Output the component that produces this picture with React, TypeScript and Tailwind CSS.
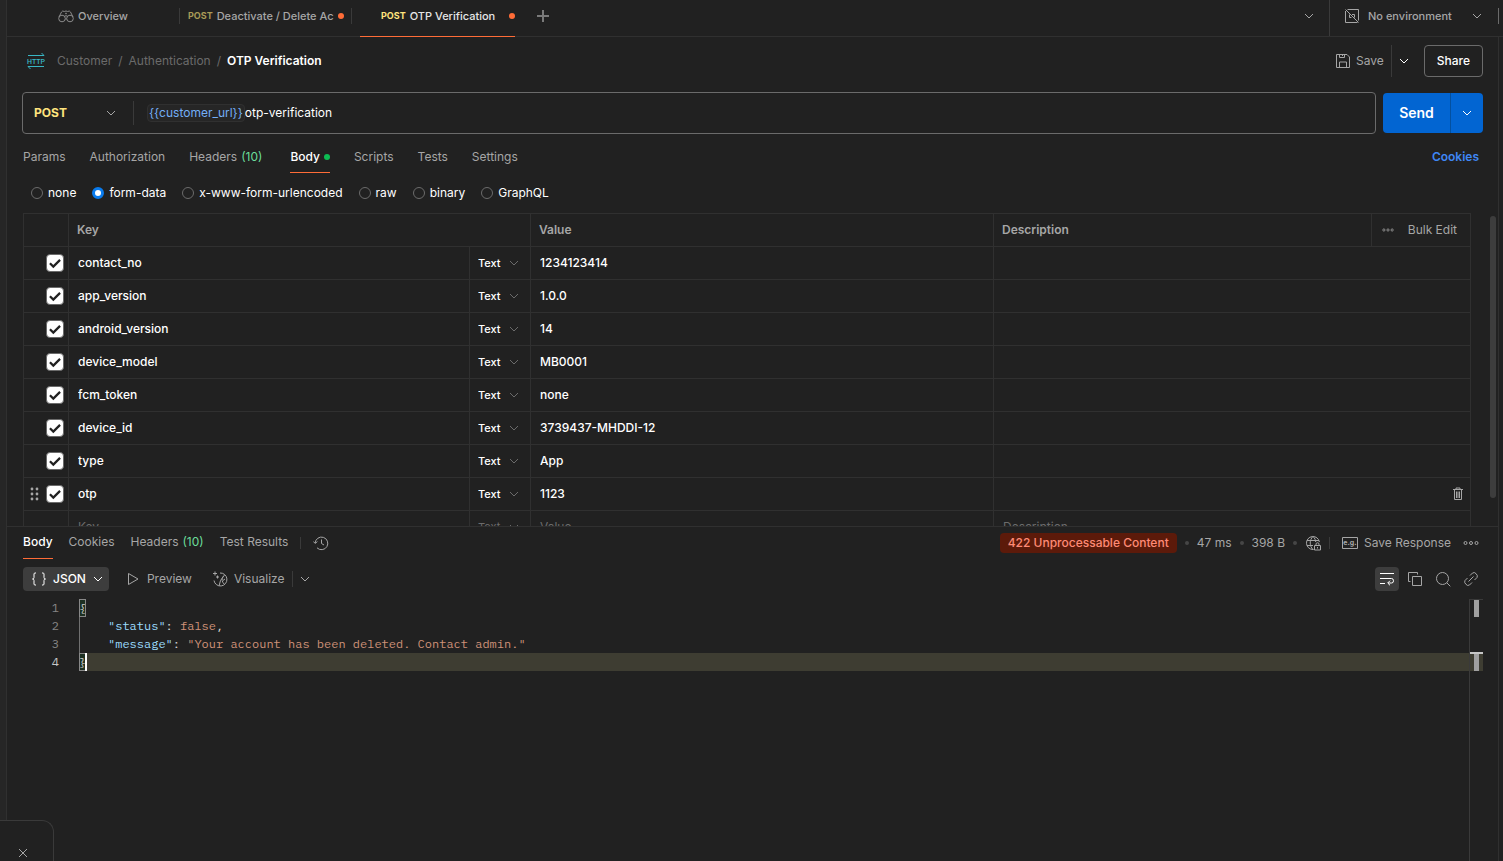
import clsx from "clsx"
import { ReactNode } from "react"

const formRows = [
  { key: "contact_no", value: "1234123414" },
  { key: "app_version", value: "1.0.0" },
  { key: "android_version", value: "14" },
  { key: "device_model", value: "MB0001" },
  { key: "fcm_token", value: "none" },
  { key: "device_id", value: "3739437-MHDDI-12" },
  { key: "type", value: "App" },
  { key: "otp", value: "1123", active: true },
]

const requestTabs = ["Params", "Authorization", "Headers", "Body", "Scripts", "Tests", "Settings"]
const responseTabs = ["Body", "Cookies", "Headers", "Test Results"]
const bodyTypes = ["none", "form-data", "x-www-form-urlencoded", "raw", "binary", "GraphQL"]

function Icon({ children, size = 16, className }: { children: ReactNode; size?: number; className?: string }) {
  return (
    <svg
      width={size}
      height={size}
      viewBox="0 0 16 16"
      fill="none"
      stroke="currentColor"
      className={clsx("shrink-0", className)}
      aria-hidden="true"
    >
      {children}
    </svg>
  )
}

function Chevron({ className }: { className?: string }) {
  return (
    <Icon className={className}>
      <path d="M4 6l4 4 4-4" />
    </Icon>
  )
}

function MoreIcon({ size }: { size?: number }) {
  return (
    <Icon size={size}>
      <circle cx="2.5" cy="8" r="1.5" />
      <circle cx="8" cy="8" r="1.5" />
      <circle cx="13.5" cy="8" r="1.5" />
    </Icon>
  )
}

function Divider({ className }: { className?: string }) {
  return <span className={clsx("w-px shrink-0 bg-[#3a3a3a]", className)} />
}

function TopBar() {
  return (
    <header className="flex h-[37px] shrink-0 items-stretch border-b border-[#303030] pb-1 text-[11px] text-[#a6a6a6]">
      <button className="flex w-[172px] items-center gap-1 pl-[51px] font-medium">
        <Icon className="text-[#8a8a8a]">
          <circle cx="4" cy="10.5" r="3.3" />
          <circle cx="12" cy="10.5" r="3.3" />
          <path d="M1 9l2.500-5Q4.500 2.300 6.300 3.500 8 2.500 9.700 3.500 11.500 2.300 12.500 4L15 9M6.500 8.300Q8 7 9.500 8.300M7.300 11h1.400" />
          <circle cx="8" cy="5.500" r=".5" />
        </Icon>
        Overview
      </button>
      <Divider className="my-2" />
      <button className="flex w-[171px] items-center gap-1 pl-2 pr-2">
        <span className="text-[9px] font-bold text-[#a89a57]">POST</span>
        <span className="whitespace-nowrap font-medium">Deactivate / Delete Ac</span>
        <span className="ml-auto size-[6px] shrink-0 rounded-full bg-[#ff6c37]" />
      </button>
      <Divider className="my-2" />
      <button className="relative ml-2 flex w-[155px] items-center gap-1 pl-[21px] text-[#e6e6e6]">
        <span className="text-[9px] font-bold text-[#ffe47e]">POST</span>
        <span className="whitespace-nowrap font-medium">OTP Verification</span>
        <span className="ml-auto size-[6px] rounded-full bg-[#ff6c37]" />
        <span className="absolute inset-x-0 -bottom-[5px] h-px bg-[#ff6c37]" />
      </button>
      <button className="ml-5 flex items-center text-[#7a7a7a]" aria-label="New tab">
        <Icon>
          <path d="M8 2v12M2 8h12" strokeWidth="2" />
        </Icon>
      </button>
      <button className="ml-auto mr-3 flex items-center" aria-label="Show open tabs">
        <Chevron />
      </button>
      <Divider className="-mb-1" />
      <button className="flex w-[168px] items-center gap-2 pl-[14px] pr-[13px] font-medium">
        <Icon>
          <path d="M3.500 1.500h11v11M1.500 3v11.500h12M1.500 1.500l13 13M7.500 9.500h-2v-3M8 6.500h2.500v3" />
        </Icon>
        <span className="whitespace-nowrap">No environment</span>
        <Chevron className="ml-auto" />
      </button>
      <span className="my-2 mr-1 w-px bg-[#6b6b6b]" />
    </header>
  )
}

function Breadcrumbs() {
  return (
    <div className="flex h-12 items-center pl-4 pr-[15px]">
      <svg width="26" height="18" viewBox="0 0 26 18" fill="none" stroke="#38b6c4" aria-hidden="true">
        <path d="M5 3.500h16M18.500 1l2.500 2.500M21 14.500H5M7.500 17L5 14.500" />
        <text
          x="13"
          y="12"
          textAnchor="middle"
          stroke="none"
          fill="#38b6c4"
          className="font-['Roboto',sans-serif] text-[7px] font-medium"
        >
          HTTP
        </text>
      </svg>
      <nav className="ml-2 flex gap-[6px] text-[#6b6b6b]">
        <a href="#customer">Customer</a>
        <span>/</span>
        <a href="#authentication">Authentication</a>
        <span>/</span>
        <span className="font-semibold text-white">OTP Verification</span>
      </nav>
      <button className="ml-auto flex items-center gap-[5px]">
        <Icon>
          <path d="M1.500 1.500h10.500l2.500 2.500v10.500h-13zM4.500 1.500v3h5v-3M4.500 14.500v-5.500h7v5.500M7.500 1.500v1.500" />
        </Icon>
        Save
      </button>
      <Divider className="ml-[7px] h-8" />
      <button className="ml-1 mr-3 text-white" aria-label="Save options">
        <Chevron />
      </button>
      <button className="h-8 rounded border border-[#6b6b6b] px-3 font-medium text-white">Share</button>
    </div>
  )
}

function UrlBar() {
  return (
    <div className="mt-[7px] flex items-center gap-[7px] pl-[15px] pr-[15px]">
      <div className="flex h-[42px] flex-1 items-center rounded border border-[#6b6b6b]">
        <div className="relative flex w-[110px] items-center">
          <select
            aria-label="Method"
            className="w-full appearance-none bg-transparent pl-[11px] font-bold text-[#ffe47e]"
          >
            <option>POST</option>
          </select>
          <Chevron className="pointer-events-none absolute right-[14px]" />
        </div>
        <Divider className="h-6" />
        <span className="ml-[13px] rounded border border-[#303030] bg-[#262626] px-px text-[#74aef6]">
          {"{{customer_url}}"}
        </span>
        <input aria-label="Request URL" defaultValue="otp-verification" className="flex-1 bg-transparent text-white outline-none" />
      </div>
      <div className="flex h-10 overflow-hidden rounded bg-[#0265d2] text-white">
        <button className="w-[67px] text-sm font-semibold">Send</button>
        <span className="w-px bg-[#03509f]" />
        <button className="flex w-8 items-center justify-center" aria-label="Send options">
          <Chevron />
        </button>
      </div>
    </div>
  )
}

function RequestTabs() {
  return (
    <div className="mt-[7px] flex h-8 items-stretch gap-6 pl-4 pr-[19px]">
      {requestTabs.map((tab) => (
        <button
          key={tab}
          className={clsx(
            "flex items-center border-b",
            tab === "Body" ? "border-[#ff6c37] font-medium text-white" : "border-transparent",
          )}
        >
          {tab}
          {tab === "Headers" && <span className="ml-1 mr-1 text-[#6bdd9a]">(10)</span>}
          {tab === "Body" && <span className="ml-1 size-[6px] rounded-full bg-[#0cbb52]" />}
        </button>
      ))}
      <a href="#cookies" className="ml-auto flex items-center font-semibold text-[#3f87f5]">
        Cookies
      </a>
    </div>
  )
}

function BodyTypes() {
  return (
    <div className="flex h-10 items-center gap-4 pl-6 text-white">
      {bodyTypes.map((type) => (
        <label key={type} className="flex items-center gap-[5px]">
          <input
            type="radio"
            name="bodyType"
            defaultChecked={type === "form-data"}
            className="size-3 appearance-none rounded-full border border-[#6b6b6b] checked:border-3 checked:border-[#097bed] checked:bg-white"
          />
          {type}
        </label>
      ))}
    </div>
  )
}

const cell = "h-[33px] border-b border-r border-[#303030] p-0"

function TypeSelect({ label }: { label: string }) {
  return (
    <div className="relative flex items-center">
      <select aria-label={label} className="w-full appearance-none bg-transparent pl-2 text-[11px]">
        <option>Text</option>
      </select>
      <Chevron className="pointer-events-none absolute right-2 text-[#6b6b6b]" />
    </div>
  )
}

function FormTable() {
  const field = "w-full bg-transparent px-[9px] outline-none placeholder:text-[#6b6b6b]"

  return (
    <table className="w-full table-fixed border-separate border-spacing-0 border-l border-t border-[#303030]">
      <colgroup>
        <col className="w-[45px]" />
        <col className="w-[401px]" />
        <col className="w-[61px]" />
        <col className="w-[463px]" />
        <col />
        <col className="w-[99px]" />
      </colgroup>
      <thead>
        <tr className="text-left text-[#a6a6a6]">
          <th className={cell} />
          <th className={cell} colSpan={2}>
            <span className="px-2 font-semibold">Key</span>
          </th>
          <th className={cell}>
            <span className="px-2 font-semibold">Value</span>
          </th>
          <th className={cell}>
            <span className="px-2 font-semibold">Description</span>
          </th>
          <th className={cell}>
            <div className="flex items-center justify-between pl-[10px] pr-[13px] font-normal">
              <button aria-label="Column options">
                <MoreIcon size={12} />
              </button>
              <button>Bulk Edit</button>
            </div>
          </th>
        </tr>
      </thead>
      <tbody className="font-medium text-white">
        {formRows.map((row) => (
          <tr key={row.key}>
            <td className={cell}>
              <div className="flex items-center justify-end gap-[6px] pr-1">
                {row.active && (
                  <svg width="10" height="16" viewBox="0 0 10 16" fill="#a6a6a6" aria-hidden="true">
                    <circle cx="2" cy="3" r="1.400" />
                    <circle cx="7" cy="3" r="1.400" />
                    <circle cx="2" cy="8" r="1.400" />
                    <circle cx="7" cy="8" r="1.400" />
                    <circle cx="2" cy="13" r="1.400" />
                    <circle cx="7" cy="13" r="1.400" />
                  </svg>
                )}
                <label className="relative block size-[18px]">
                  <input
                    type="checkbox"
                    defaultChecked
                    aria-label={`Include ${row.key}`}
                    className="block size-full appearance-none rounded border border-[#6b6b6b] checked:bg-white"
                  />
                  <Icon size={18} className="absolute inset-0 text-[#212121]">
                    <path d="M3.500 8.200l3 3 6-6" strokeWidth="2" />
                  </Icon>
                </label>
              </div>
            </td>
            <td className={cell}>
              <input className={field} aria-label="Key" defaultValue={row.key} />
            </td>
            <td className={cell}>
              <TypeSelect label={`Type of ${row.key}`} />
            </td>
            <td className={cell}>
              <input className={field} aria-label="Value" defaultValue={row.value} />
            </td>
            <td className={cell} colSpan={2}>
              <div className="flex items-center">
                <input className={field} aria-label="Description" />
                {row.active && (
                  <button className="mr-1 text-[#a6a6a6]" aria-label="Delete row">
                    <Icon>
                      <path d="M3 3.500h10M6 3V2h4v1M4.500 4v9.500h7V4M6.500 5.500v6.500M8 5.500v6.500M9.500 5.500v6.500" />
                    </Icon>
                  </button>
                )}
              </div>
            </td>
          </tr>
        ))}
        <tr className="font-normal text-[#6b6b6b]">
          <td className={cell} />
          <td className={cell}>
            <input className={field} aria-label="New key" placeholder="Key" />
          </td>
          <td className={cell}>
            <TypeSelect label="Type of new row" />
          </td>
          <td className={cell}>
            <input className={field} aria-label="New value" placeholder="Value" />
          </td>
          <td className={cell} colSpan={2}>
            <input className={field} aria-label="New description" placeholder="Description" />
          </td>
        </tr>
      </tbody>
    </table>
  )
}

function ResponseHeader() {
  return (
    <div className="flex h-8 items-stretch gap-4 pl-4 pr-[19px]">
      {responseTabs.map((tab) => (
        <button
          key={tab}
          className={clsx(
            "flex items-center whitespace-nowrap border-b",
            tab === "Body" ? "border-[#ff6c37] font-medium text-white" : "border-transparent",
          )}
        >
          {tab}
          {tab === "Headers" && <span className="ml-1 text-[#6bdd9a]">(10)</span>}
        </button>
      ))}
      <div className="-ml-1 flex items-center gap-3">
        <Divider className="h-3" />
        <button aria-label="Response history">
          <Icon>
            <path d="M2.200 8A6.300 6.300 0 1 1 4 12.800M.300 6.500l2 2 2-2M8.500 4.500v4l2.500 1.500" />
          </Icon>
        </button>
      </div>
      <div className="ml-auto flex items-center">
        <span className="rounded bg-[#5c1a0a] px-2 leading-5 font-medium text-[#ff8a75]">422 Unprocessable Content</span>
        <span className="mx-2 size-1 rounded-full bg-[#464646]" />
        <span>47 ms</span>
        <span className="mx-2 size-1 rounded-full bg-[#464646]" />
        <span>398 B</span>
        <span className="mx-2 size-1 rounded-full bg-[#464646]" />
        <button aria-label="Network information">
          <Icon>
            <path d="M8.500 14.500H8a6.500 6.500 0 1 1 6.400-7.500M8 1.500C4.300 5 4.300 11 8 14.500M8 1.500c1.800 1.700 2.700 3.600 2.700 5.500M2 5.500h12M2 10.500h6" />
            <path d="M9.500 10.500h6v4.500h-6zM11 10.500V9q0-1.200 1.500-1.200T14 9v1.500M12.500 12v1.500" />
          </Icon>
        </button>
        <Divider className="mx-2 h-3" />
        <button className="ml-1 flex items-center gap-[6px]">
          <svg width="16" height="12" viewBox="0 0 16 12" fill="none" stroke="currentColor" aria-hidden="true">
            <path d="M.5.5h15v11H.5z" />
            <text x="8" y="8" textAnchor="middle" stroke="none" fill="currentColor" className="text-[7px] font-bold">
              e.g.
            </text>
          </svg>
          Save Response
        </button>
        <button className="ml-3" aria-label="More actions">
          <MoreIcon />
        </button>
      </div>
    </div>
  )
}

function ResponseToolbar() {
  return (
    <div className="my-2 flex h-6 items-center pl-4 pr-[15px]">
      <button className="flex h-6 items-center gap-[6px] rounded bg-[#3d3d3d] pl-2 pr-[3px] font-medium text-white">
        <Icon>
          <path d="M5 2H4Q3 2 3 3v3.500Q3 8 1.500 8 3 8 3 9.500V13q0 1 1 1h1M11 2h1q1 0 1 1v3.500Q13 8 14.500 8 13 8 13 9.500V13q0 1-1 1h-1" />
        </Icon>
        JSON
        <Chevron className="-ml-[2px]" />
      </button>
      <button className="ml-4 flex items-center gap-[6px]">
        <Icon>
          <path d="M3.500 2.500v11L13 8z" />
        </Icon>
        Preview
      </button>
      <button className="ml-5 flex items-center gap-[6px]">
        <Icon>
          <path d="M8 2A6.500 6.500 0 1 1 2 9.500M7 15l1.500-5.500L12.500 4M11 5.500Q8.500 9.500 12.500 13.500M11 9.500l2-1.500M3 .5v4M1 2.500h4M5.500 4.500v3M4 6h3" />
        </Icon>
        Visualize
      </button>
      <Divider className="ml-[7px] h-4" />
      <button className="ml-1" aria-label="More views">
        <Chevron />
      </button>
      <div className="ml-auto flex gap-1">
        <button className="flex size-6 items-center justify-center rounded bg-[#3d3d3d] text-white" aria-label="Wrap lines">
          <Icon>
            <path d="M1 2.500h14M1 7.500h11.500q2 0 2 2.300t-2 2.200H9M1 12.500h5M11 9.700L8.700 12l2.300 2.300" />
          </Icon>
        </button>
        <button className="flex size-6 items-center justify-center" aria-label="Copy">
          <Icon>
            <path d="M5.500 5.500h9v9h-9zM3.500 10.500h-2v-9h9v2" />
          </Icon>
        </button>
        <button className="flex size-6 items-center justify-center" aria-label="Search">
          <Icon>
            <circle cx="7.500" cy="7.500" r="6" />
            <path d="M11.800 11.800l3.500 3.500" />
          </Icon>
        </button>
        <button className="flex size-6 items-center justify-center" aria-label="Copy link">
          <Icon>
            <path d="M5.500 10.500l5-5M7 4.500l2.500-2.500q2-1.300 3.700.8 1.900 1.900.8 3.700L11.500 9M9 11.500L6.500 14q-2 1.300-3.700-.8Q.9 11.300 2 9.500L4.500 7" />
          </Icon>
        </button>
      </div>
    </div>
  )
}

function CodeLine({ number, active, children }: { number: number; active?: boolean; children: ReactNode }) {
  return (
    <div className="flex h-[18px]">
      <span className={clsx("w-9 shrink-0 text-right", active ? "text-[#c6c6c6]" : "text-[#858585]")}>{number}</span>
      <pre className={clsx("ml-5 flex-1 font-[inherit]", active && "bg-[#3e3d32]")}>{children}</pre>
    </div>
  )
}

function Brace({ children }: { children: ReactNode }) {
  return (
    <span className="inline-block h-[18px] w-[7px] bg-[#1d3022] outline outline-[#888888] -outline-offset-1">
      {children}
    </span>
  )
}

function ResponseCode() {
  return (
    <div className="flex flex-1 pl-4 pr-[15px] font-['IBM_Plex_Mono','Liberation_Mono',monospace] text-xs leading-[18px] text-[#d4d4d4]">
      <div className="flex-1">
        <CodeLine number={1}>
          <Brace>{"{"}</Brace>
        </CodeLine>
        <CodeLine number={2}>
          <span className="inline-block h-[18px] border-l border-[#707070] pl-7 text-[#9cdcfe]">"status"</span>:{" "}
          <span className="text-[#ce9178]">false</span>,
        </CodeLine>
        <CodeLine number={3}>
          <span className="inline-block h-[18px] border-l border-[#707070] pl-7 text-[#9cdcfe]">"message"</span>:{" "}
          <span className="text-[#ce9178]">"Your account has been deleted. Contact admin."</span>
        </CodeLine>
        <CodeLine number={4} active>
          <Brace>{"}"}</Brace>
          <span className="-ml-px inline-block h-[18px] w-[2px] bg-white align-top" />
        </CodeLine>
      </div>
      {/* overview ruler */}
      <div className="flex w-[14px] flex-col border-l border-t border-[#3a3a3a]">
        <div className="ml-1 h-[17px] w-[5px] bg-[#a0a0a0]" />
        <div className="mt-[35px] h-[2px] bg-[#c6c6c6]" />
        <div className="h-[17px] bg-[#3e3d32] pl-1">
          <div className="h-full w-[5px] bg-[#a0a0a0]" />
        </div>
      </div>
    </div>
  )
}

export default function App() {
  return (
    <div className="relative flex h-screen overflow-hidden bg-[#212121] font-['Inter',sans-serif] text-xs text-[#a6a6a6]">
      <aside className="w-[7px] shrink-0 border-r border-[#303030] bg-[#262626]" />
      <div className="flex min-w-0 flex-1 flex-col">
        <TopBar />
        <div className="flex min-h-0 flex-1">
          <main className="flex min-w-0 flex-1 flex-col">
            <section className="flex min-h-0 flex-[60_1_0%] flex-col">
              <Breadcrumbs />
              <UrlBar />
              <RequestTabs />
              <BodyTypes />
              <div className="flex min-h-0 flex-1 overflow-hidden pl-4 pr-[2px]">
                <div className="min-w-0 flex-1">
                  <FormTable />
                </div>
                <div className="ml-[19px] mt-[3px] h-[90%] w-[6px] rounded-full bg-[#3d3d3d]" />
              </div>
            </section>
            <section className="flex min-h-0 flex-[41_1_0%] flex-col border-t border-[#303030]">
              <ResponseHeader />
              <ResponseToolbar />
              <ResponseCode />
            </section>
          </main>
          <aside className="w-[5px] shrink-0 border-l border-[#303030]" />
        </div>
      </div>
      <div className="absolute bottom-0 left-0 flex h-[41px] w-[54px] items-end rounded-tr-xl border-r border-t border-[#3a3a3a] bg-[#212121] pl-[15px]">
        <button aria-label="Close">
          <Icon>
            <path d="M4 4l8 8M12 4l-8 8" />
          </Icon>
        </button>
      </div>
    </div>
  )
}
